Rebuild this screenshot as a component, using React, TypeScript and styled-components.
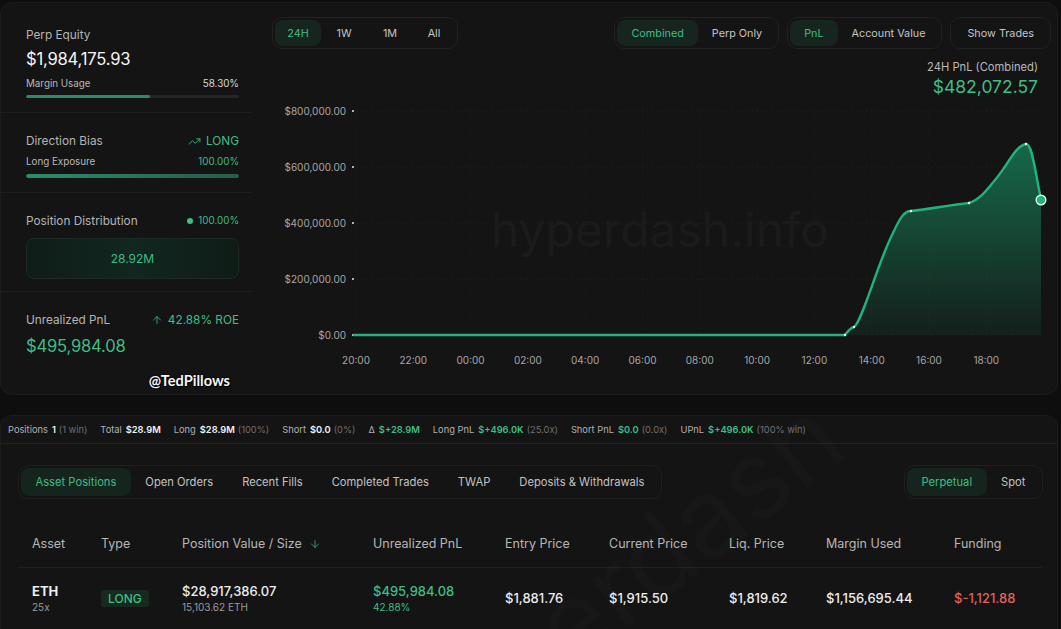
import React from 'react'
import styled, { createGlobalStyle } from 'styled-components'
import { TrendingUp, ArrowUp, ArrowDown } from 'lucide-react'

const GREEN = '#3fbd87'

const Global = createGlobalStyle`
    body {
        margin: 0;
        background: #0e0e0e;
        font-family: Inter, "Noto Sans", sans-serif;
        color: #ececec;
        overflow: hidden;
    }
`

const Page = styled.div`
    width: 1058px;
    padding-top: 2px;
`

const TopCard = styled.div`
    display: grid;
    grid-template-columns: 252px 1fr;
    height: 393px;
    box-sizing: border-box;
    background: #141414;
    border: 1px solid #1c1c1c;
    border-radius: 12px;
    overflow: hidden;
`

const Side = styled.div`
    display: flex;
    flex-direction: column;
`

const Section = styled.div<{ $pt: number; $pb: number; $last?: boolean }>`
    padding: ${p => p.$pt}px 14px ${p => p.$pb}px 25px;
    border-bottom: ${p => (p.$last ? 'none' : '1px solid #1e1e1e')};
    display: flex;
    flex-direction: column;
`

const Row = styled.div<{ $mt?: number }>`
    display: flex;
    justify-content: space-between;
    align-items: center;
    margin-top: ${p => p.$mt || 0}px;
`

const Label = styled.span<{ $small?: boolean }>`
    font-size: ${p => (p.$small ? 9.8 : 11.8)}px;
    line-height: ${p => (p.$small ? 14 : 16)}px;
    color: ${p => (p.$small ? '#b8b8b8' : '#b4b4b4')};
`

const Value = styled.span<{ $small?: boolean; $green?: boolean }>`
    display: inline-flex;
    align-items: center;
    gap: 5px;
    font-size: ${p => (p.$small ? 9.8 : 11.8)}px;
    line-height: ${p => (p.$small ? 14 : 16)}px;
    color: ${p => (p.$green ? GREEN : '#d8d8d8')};
`

const BigNumber = styled.div<{ $green?: boolean; $mt: number }>`
    font-size: 16.6px;
    line-height: 24px;
    margin-top: ${p => p.$mt}px;
    color: ${p => (p.$green ? GREEN : '#f4f4f4')};
    letter-spacing: -0.2px;
`

const Track = styled.div<{ $h: number; $mt: number }>`
    height: ${p => p.$h}px;
    margin-top: ${p => p.$mt}px;
    border-radius: 3px;
    background: #262626;
    overflow: hidden;
`

const Fill = styled.div<{ $gradient?: boolean }>`
    height: 100%;
    border-radius: 3px;
    background: ${p => (p.$gradient ? 'linear-gradient(90deg, #2f8c69, #265c48)' : '#2e8a67')};
`

const Dot = styled.span`
    width: 6px;
    height: 6px;
    border-radius: 50%;
    background: ${GREEN};
`

const DistBox = styled.div`
    margin-top: 9px;
    height: 39px;
    border-radius: 8px;
    border: 1px solid #1d2a24;
    background: linear-gradient(90deg, #0f1d17, #112720 50%, #0f1c16);
    display: flex;
    align-items: center;
    justify-content: center;
    color: ${GREEN};
    font-size: 12px;
`

const Handle = styled.div`
    align-self: flex-end;
    margin: 14px 9px 0 0;
    font-family: Lato, "Open Sans", sans-serif;
    font-weight: 700;
    font-size: 14.6px;
    line-height: 18px;
    color: #f5f5f5;
    text-shadow: 0 0 2px #000, 1px 1px 1px #000;
`

const ChartCol = styled.div`
    padding: 14px 9px 0 19px;
    display: flex;
    flex-direction: column;
`

const Toolbar = styled.div`
    display: flex;
    justify-content: space-between;
    align-items: center;
`

const ToolGroup = styled.div`
    display: flex;
    gap: 8px;
`

const Toggle = styled.div`
    display: flex;
    padding: 2px;
    border: 1px solid #212121;
    border-radius: 10px;
    background: #141414;
`

const ToggleItem = styled.div<{ $active?: boolean; $w?: number }>`
    height: 26px;
    display: flex;
    align-items: center;
    justify-content: center;
    padding: ${p => (p.$w ? '0' : '0 14px')};
    width: ${p => (p.$w ? `${p.$w}px` : 'auto')};
    border-radius: 8px;
    font-size: 10.8px;
    color: ${p => (p.$active ? GREEN : '#c4c4c4')};
    background: ${p => (p.$active ? '#16261e' : 'transparent')};
    white-space: nowrap;
`

const PnlHead = styled.div`
    margin: 10px 13px 0 0;
    display: flex;
    flex-direction: column;
    align-items: flex-end;
`

const PnlLabel = styled.div`
    font-size: 11.2px;
    line-height: 16px;
    color: #b9b9b9;
`

const PnlValue = styled.div`
    font-size: 17.5px;
    line-height: 24px;
    color: ${GREEN};
`

const ChartSvg = styled.svg`
    display: block;
    margin: 1px 0 0 -9px;
`

const Bottom = styled.div`
    position: relative;
    margin-top: 20px;
    height: 214px;
    background: #141414;
    border: 1px solid #1c1c1c;
    border-bottom: none;
    border-radius: 12px 12px 0 0;
    overflow: hidden;
`

const Stats = styled.div`
    height: 27px;
    display: flex;
    align-items: center;
    gap: 13px;
    padding-left: 7px;
    border-bottom: 1px solid #222;
    font-size: 9.3px;
    white-space: nowrap;
`

const Stat = styled.span`
    display: inline-flex;
    align-items: baseline;
    gap: 4px;
    color: #b0b0b0;
`

const StatVal = styled.b<{ $green?: boolean }>`
    font-weight: 600;
    color: ${p => (p.$green ? GREEN : '#f2f2f2')};
`

const Muted = styled.span`
    color: #6f6f6f;
    margin-left: -1px;
`

const Tabs = styled.div`
    display: flex;
    justify-content: space-between;
    padding: 21px 14px 0 17px;
`

const TabGroup = styled.div`
    display: flex;
    padding: 2px;
    border: 1px solid #1f1f1f;
    border-radius: 10px;
`

const Tab = styled.div<{ $active?: boolean }>`
    height: 28px;
    padding: 0 14.5px;
    display: flex;
    align-items: center;
    border-radius: 8px;
    font-size: 11.2px;
    color: ${p => (p.$active ? GREEN : '#c2c2c2')};
    background: ${p => (p.$active ? '#15251d' : 'transparent')};
`

const Table = styled.div`
    margin: 21px 15px 0 17px;
`

const Grid = styled.div<{ $head?: boolean }>`
    display: grid;
    grid-template-columns: 69px 81px 191px 132px 104px 120px 97px 128px 1fr;
    align-items: center;
    padding-left: 14px;
    height: ${p => (p.$head ? 47 : 60)}px;
    border-bottom: ${p => (p.$head ? '1px solid #1f1f1f' : 'none')};
`

const Th = styled.div`
    display: flex;
    align-items: center;
    gap: 7px;
    font-size: 12.5px;
    color: #b6b6b6;
`

const Cell = styled.div`
    display: flex;
    flex-direction: column;
`

const Main = styled.span<{ $color?: string; $bold?: boolean }>`
    font-size: 13px;
    line-height: 17px;
    font-weight: ${p => (p.$bold ? 700 : 500)};
    color: ${p => p.$color || '#ededed'};
`

const Sub = styled.span<{ $color?: string }>`
    font-size: 10px;
    line-height: 14px;
    color: ${p => p.$color || '#9a9a9a'};
`

const Badge = styled.span`
    align-self: flex-start;
    padding: 1px 7px;
    border-radius: 3px;
    background: #18291f;
    color: ${GREEN};
    font-size: 12px;
    line-height: 15px;
    font-weight: 500;
`

const Watermark = styled.div`
    position: absolute;
    left: 360px;
    top: 300px;
    font-size: 110px;
    line-height: 1;
    color: rgba(255, 255, 255, 0.016);
    transform: rotate(-38deg);
    transform-origin: left top;
    pointer-events: none;
    white-space: nowrap;
`

const yTicks = [
    { v: '$800,000.00', y: 111 },
    { v: '$600,000.00', y: 167 },
    { v: '$400,000.00', y: 223 },
    { v: '$200,000.00', y: 279 },
    { v: '$0.00', y: 335 },
]

const xTicks = ['20:00', '22:00', '00:00', '02:00', '04:00', '06:00', '08:00', '10:00', '12:00', '14:00', '16:00', '18:00']

const curve =
    'M353,335 H845 C848,331 850,328 854,327 C862,322 878,262 893,233 C900,218 904,211 911,211 ' +
    'C930,209 950,205 969,203 C980,200 988,188 995,180 C1008,165 1015,146 1026,144 C1032,143 1035,170 1041,200'

function Chart() {
    return (
        <ChartSvg width={788} height={275}>
            <defs>
                <linearGradient id="area" x1="0" y1="0" x2="0" y2="1">
                    <stop offset="0%" stopColor="#17a06d" stopOpacity={0.6} />
                    <stop offset="100%" stopColor="#17a06d" stopOpacity={0.08} />
                </linearGradient>
            </defs>
            <g transform="translate(-263,-100)">
                <text x={660} y={247} textAnchor="middle" fontSize={48} fill="#1b1b1b" fontFamily="Inter, sans-serif">
                    hyperdash.info
                </text>
                {yTicks.map(t => (
                    <g key={t.v}>
                        <line x1={356} x2={1041} y1={t.y} y2={t.y} stroke="#1c1c1c" strokeDasharray="2 3" />
                        <text x={346} y={t.y + 3.5} textAnchor="end" fontSize={10} fill="#a6a6a6" fontFamily="Inter, sans-serif">
                            {t.v}
                        </text>
                        <circle cx={353} cy={t.y} r={1} fill="#e6e6e6" />
                    </g>
                ))}
                {xTicks.map((t, i) => {
                    const x = 356 + i * 57.3
                    return (
                        <g key={t}>
                            <line x1={x} x2={x} y1={108} y2={335} stroke="#1b1b1b" strokeDasharray="2 3" />
                            <text x={x} y={364} textAnchor="middle" fontSize={10} fill="#a6a6a6" fontFamily="Inter, sans-serif">
                                {t}
                            </text>
                        </g>
                    )
                })}
                <path d={curve + ' V335 H845 Z'} fill="url(#area)" />
                <path d={curve} fill="none" stroke="#22b37d" strokeWidth={2.4} strokeLinejoin="round" />
                {[
                    [845, 335],
                    [854, 327],
                    [911, 211],
                    [969, 203],
                    [1026, 144],
                ].map(([x, y]) => (
                    <circle key={x} cx={x} cy={y} r={1.2} fill="#e8fff4" />
                ))}
                <circle cx={1041} cy={200} r={4.8} fill="#22b37d" stroke="#eafff5" strokeWidth={1.4} />
            </g>
        </ChartSvg>
    )
}

export default function App() {
    return (
        <Page>
            <Global />
            <TopCard>
                <Side>
                    <Section $pt={24} $pb={14}>
                        <Label>Perp Equity</Label>
                        <BigNumber $mt={4}>$1,984,175.93</BigNumber>
                        <Row $mt={6}>
                            <Label $small>Margin Usage</Label>
                            <Value $small>58.30%</Value>
                        </Row>
                        <Track $h={3} $mt={4}>
                            <Fill style={{ width: '58.3%' }} />
                        </Track>
                    </Section>
                    <Section $pt={20} $pb={14}>
                        <Row>
                            <Label>Direction Bias</Label>
                            <Value $green>
                                <TrendingUp size={13} strokeWidth={1.6} /> LONG
                            </Value>
                        </Row>
                        <Row $mt={6}>
                            <Label $small>Long Exposure</Label>
                            <Value $small $green>100.00%</Value>
                        </Row>
                        <Track $h={4} $mt={5}>
                            <Fill $gradient style={{ width: '100%' }} />
                        </Track>
                    </Section>
                    <Section $pt={20} $pb={12}>
                        <Row>
                            <Label>Position Distribution</Label>
                            <Value $small $green>
                                <Dot /> 100.00%
                            </Value>
                        </Row>
                        <DistBox>28.92M</DistBox>
                    </Section>
                    <Section $pt={20} $pb={0} $last>
                        <Row>
                            <Label>Unrealized PnL</Label>
                            <Value $green>
                                <ArrowUp size={12} strokeWidth={1.6} /> 42.88% ROE
                            </Value>
                        </Row>
                        <BigNumber $mt={6} $green>$495,984.08</BigNumber>
                        <Handle>@TedPillows</Handle>
                    </Section>
                </Side>
                <ChartCol>
                    <Toolbar>
                        <Toggle>
                            <ToggleItem $active $w={46}>24H</ToggleItem>
                            <ToggleItem $w={46}>1W</ToggleItem>
                            <ToggleItem $w={46}>1M</ToggleItem>
                            <ToggleItem $w={42}>All</ToggleItem>
                        </Toggle>
                        <ToolGroup>
                            <Toggle>
                                <ToggleItem $active>Combined</ToggleItem>
                                <ToggleItem>Perp Only</ToggleItem>
                            </Toggle>
                            <Toggle>
                                <ToggleItem $active>PnL</ToggleItem>
                                <ToggleItem>Account Value</ToggleItem>
                            </Toggle>
                            <Toggle>
                                <ToggleItem>Show Trades</ToggleItem>
                            </Toggle>
                        </ToolGroup>
                    </Toolbar>
                    <PnlHead>
                        <PnlLabel>24H PnL (Combined)</PnlLabel>
                        <PnlValue>$482,072.57</PnlValue>
                    </PnlHead>
                    <Chart />
                </ChartCol>
            </TopCard>

            <Bottom>
                <Watermark>hyperdash</Watermark>
                <Stats>
                    <Stat>Positions <StatVal>1</StatVal><Muted>(1 win)</Muted></Stat>
                    <Stat>Total <StatVal>$28.9M</StatVal></Stat>
                    <Stat>Long <StatVal>$28.9M</StatVal><Muted>(100%)</Muted></Stat>
                    <Stat>Short <StatVal>$0.0</StatVal><Muted>(0%)</Muted></Stat>
                    <Stat>Δ <StatVal $green>$+28.9M</StatVal></Stat>
                    <Stat>Long PnL <StatVal $green>$+496.0K</StatVal><Muted>(25.0x)</Muted></Stat>
                    <Stat>Short PnL <StatVal $green>$0.0</StatVal><Muted>(0.0x)</Muted></Stat>
                    <Stat>UPnL <StatVal $green>$+496.0K</StatVal><Muted>(100% win)</Muted></Stat>
                </Stats>
                <Tabs>
                    <TabGroup>
                        <Tab $active>Asset Positions</Tab>
                        <Tab>Open Orders</Tab>
                        <Tab>Recent Fills</Tab>
                        <Tab>Completed Trades</Tab>
                        <Tab>TWAP</Tab>
                        <Tab>Deposits &amp; Withdrawals</Tab>
                    </TabGroup>
                    <TabGroup>
                        <Tab $active>Perpetual</Tab>
                        <Tab>Spot</Tab>
                    </TabGroup>
                </Tabs>
                <Table>
                    <Grid $head>
                        <Th>Asset</Th>
                        <Th>Type</Th>
                        <Th>
                            Position Value / Size <ArrowDown size={12} color={GREEN} strokeWidth={1.5} />
                        </Th>
                        <Th>Unrealized PnL</Th>
                        <Th>Entry Price</Th>
                        <Th>Current Price</Th>
                        <Th>Liq. Price</Th>
                        <Th>Margin Used</Th>
                        <Th>Funding</Th>
                    </Grid>
                    <Grid>
                        <Cell>
                            <Main $bold>ETH</Main>
                            <Sub>25x</Sub>
                        </Cell>
                        <Cell>
                            <Badge>LONG</Badge>
                        </Cell>
                        <Cell>
                            <Main>$28,917,386.07</Main>
                            <Sub>15,103.62 ETH</Sub>
                        </Cell>
                        <Cell>
                            <Main $color={GREEN}>$495,984.08</Main>
                            <Sub $color={GREEN}>42.88%</Sub>
                        </Cell>
                        <Main>$1,881.76</Main>
                        <Main>$1,915.50</Main>
                        <Main>$1,819.62</Main>
                        <Main>$1,156,695.44</Main>
                        <Main $color="#e0625e">$-1,121.88</Main>
                    </Grid>
                </Table>
            </Bottom>
        </Page>
    )
}
